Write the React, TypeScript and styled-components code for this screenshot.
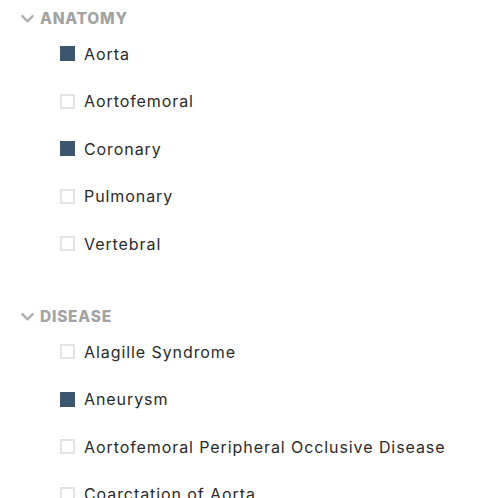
import React from "react";
import styled, { createGlobalStyle } from "styled-components";

const Global = createGlobalStyle`
  html, body { margin: 0; padding: 0; background: #ffffff; }
  body { font-family: "Poppins", "Inter", "Noto Sans", sans-serif; }
`;

const Page = styled.div`
  padding: 6px 0 0 20px;
  display: flex;
  flex-direction: column;
  gap: 36.5px;
`;

const Section = styled.section`
  display: flex;
  flex-direction: column;
`;

const Header = styled.div`
  height: 24px;
  display: flex;
  align-items: center;
  gap: 5px;
  color: #a3a3a3;
  font-family: "Inter", "Noto Sans", sans-serif;
  font-weight: 800;
  font-size: 15.5px;
  letter-spacing: 0.75px;
`;

const Chevron = styled.svg`
  width: 15px;
  height: 15px;
  display: block;
`;

const List = styled.ul`
  list-style: none;
  margin: 0;
  padding: 0 0 0 40px;
`;

const Item = styled.li`
  height: 47.5px;
  display: flex;
  align-items: center;
  gap: 9px;
  font-family: "Inter", "Noto Sans", sans-serif;
  font-size: 16px;
  letter-spacing: 0.92px;
  color: #2a2a2a;
`;

const Box = styled.span<{ $checked: boolean }>`
  width: 15px;
  height: 15px;
  box-sizing: border-box;
  flex: none;
  background: ${(p) => (p.$checked ? "#3d5670" : "#ffffff")};
  border: ${(p) => (p.$checked ? "none" : "2px solid #e4e4e4")};
`;

type Entry = { label: string; checked: boolean };

const sections: { title: string; items: Entry[] }[] = [
  {
    title: "ANATOMY",
    items: [
      { label: "Aorta", checked: true },
      { label: "Aortofemoral", checked: false },
      { label: "Coronary", checked: true },
      { label: "Pulmonary", checked: false },
      { label: "Vertebral", checked: false },
    ],
  },
  {
    title: "DISEASE",
    items: [
      { label: "Alagille Syndrome", checked: false },
      { label: "Aneurysm", checked: true },
      { label: "Aortofemoral Peripheral Occlusive Disease", checked: false },
      { label: "Coarctation of Aorta", checked: false },
    ],
  },
];

export default function App() {
  return (
    <>
      <Global />
      <Page>
        {sections.map((s) => (
          <Section key={s.title}>
            <Header>
              <Chevron viewBox="0 0 16 16" fill="none">
                <path d="M2.5 5.5 L8 11 L13.5 5.5" stroke="#b0b0b0" strokeWidth="2.6" strokeLinecap="round" strokeLinejoin="round" />
              </Chevron>
              {s.title}
            </Header>
            <List>
              {s.items.map((it) => (
                <Item key={it.label}>
                  <Box $checked={it.checked} />
                  {it.label}
                </Item>
              ))}
            </List>
          </Section>
        ))}
      </Page>
    </>
  );
}
